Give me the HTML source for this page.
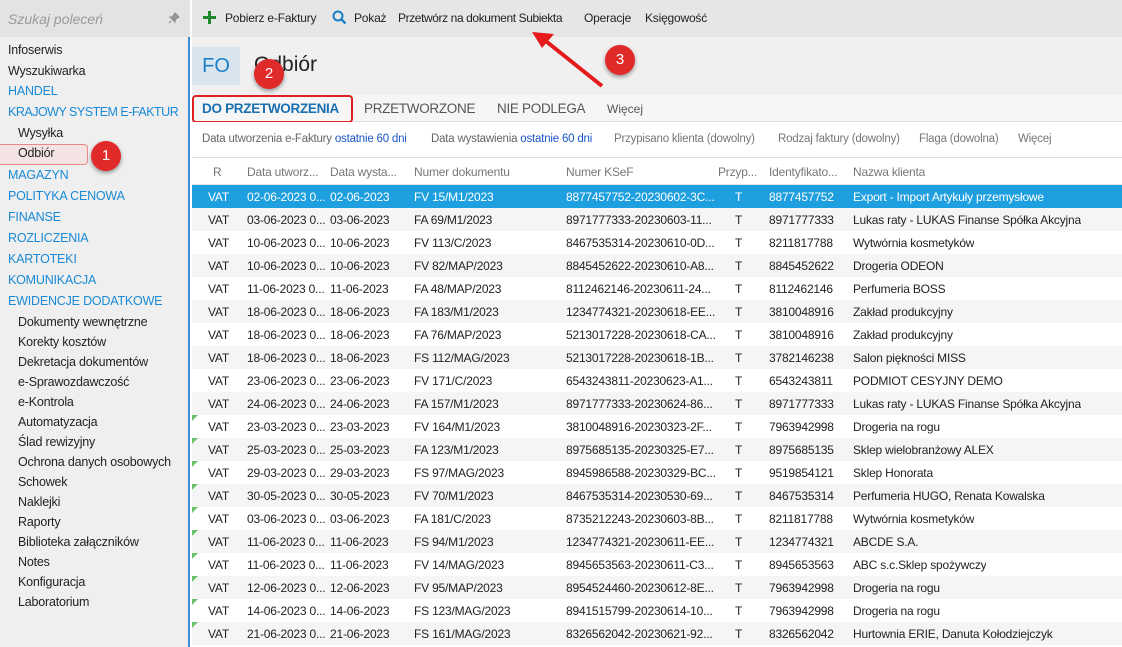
<!DOCTYPE html>
<html><head><meta charset="utf-8"><style>
*{margin:0;padding:0;box-sizing:border-box}
body{width:1122px;height:647px;overflow:hidden;background:#fff;font-family:"Liberation Sans",sans-serif;font-size:12px;color:#222;position:relative}
.abs{position:absolute;white-space:nowrap}
#side{position:absolute;left:0;top:0;width:190px;height:647px;background:#efefef;border-right:2px solid #3d8ed0}
#search{position:absolute;left:0;top:0;width:190px;height:37px;background:#e3e3e3}
.s{position:absolute;left:8px;font-size:12.5px;color:#222;white-space:nowrap;letter-spacing:-0.2px}
.b{color:#1a8ad6}
.i{left:18px}
#tb{position:absolute;left:192px;top:0;width:930px;height:37px;background:#e6e6e6;font-size:12px;letter-spacing:-0.2px}
#hd{position:absolute;left:192px;top:37px;width:930px;height:58px;background:#f0f0f0}
#tabs{position:absolute;left:192px;top:95px;width:930px;height:27px;background:#f6f6f6;border-bottom:1px solid #ddd}
#filt{position:absolute;left:192px;top:122px;width:930px;height:36px;background:#fff;border-bottom:1px solid #ddd;letter-spacing:-0.2px}
.row{position:absolute;left:192px;width:930px;height:23px;letter-spacing:-0.2px}
.row span{position:absolute;top:5px;white-space:nowrap;overflow:hidden}
.sel{background:#1e9fe0;color:#fff}
.g{background:#f5f5f5}
.tri{position:absolute;left:0;top:0;width:0;height:0;border-top:6px solid #6cc16c;border-right:6px solid transparent}
.badge{position:absolute;width:30px;height:30px;border-radius:50%;background:#e02a2a;color:#fff;font-size:15px;text-align:center;line-height:30px;box-shadow:0 2px 4px rgba(0,0,0,.4)}
</style></head><body>
<div id="side">
<div id="search"><span class="abs" style="left:8px;top:11px;color:#999;font-style:italic;font-size:14px">Szukaj poleceń</span>
<svg class="abs" style="left:168px;top:12px" width="12" height="12" viewBox="0 0 12 12"><path d="M7 1l4 4-2 1-2 2 0 2-5-5 2 0 2-2z M3 9l-2 2" stroke="#888" fill="#999" stroke-width="1"/></svg></div>
<div class="s" style="top:43px">Infoserwis</div>
<div class="s" style="top:64px">Wyszukiwarka</div>
<div class="s b" style="top:84px">HANDEL</div>
<div class="s b" style="top:105px;letter-spacing:-0.5px">KRAJOWY SYSTEM E-FAKTUR</div>
<div class="s i" style="top:126px">Wysyłka</div>
<div class="abs" style="left:0;top:144px;width:88px;height:21px;border:1.5px solid #e88;border-left:none;border-radius:0 4px 4px 0;background:#f3e3e3"></div>
<div class="s i" style="top:146px">Odbiór</div>
<div class="s b" style="top:168px">MAGAZYN</div>
<div class="s b" style="top:189px">POLITYKA CENOWA</div>
<div class="s b" style="top:210px">FINANSE</div>
<div class="s b" style="top:231px">ROZLICZENIA</div>
<div class="s b" style="top:252px">KARTOTEKI</div>
<div class="s b" style="top:273px">KOMUNIKACJA</div>
<div class="s b" style="top:294px">EWIDENCJE DODATKOWE</div>
<div class="s i" style="top:315px">Dokumenty wewnętrzne</div>
<div class="s i" style="top:335px">Korekty kosztów</div>
<div class="s i" style="top:355px">Dekretacja dokumentów</div>
<div class="s i" style="top:375px">e-Sprawozdawczość</div>
<div class="s i" style="top:395px">e-Kontrola</div>
<div class="s i" style="top:415px">Automatyzacja</div>
<div class="s i" style="top:435px">Ślad rewizyjny</div>
<div class="s i" style="top:455px">Ochrona danych osobowych</div>
<div class="s i" style="top:475px">Schowek</div>
<div class="s i" style="top:495px">Naklejki</div>
<div class="s i" style="top:515px">Raporty</div>
<div class="s i" style="top:535px">Biblioteka załączników</div>
<div class="s i" style="top:555px">Notes</div>
<div class="s i" style="top:575px">Konfiguracja</div>
<div class="s i" style="top:595px">Laboratorium</div>
</div>
<div class="badge" style="left:91px;top:141px">1</div>

<div id="tb">
<svg class="abs" style="left:11px;top:11px" width="13" height="13" viewBox="0 0 13 13"><path d="M6.5 0v13M0 6.5h13" stroke="#1e8a2e" stroke-width="3"/></svg>
<span class="abs" style="left:33px;top:11px">Pobierz e-Faktury</span>
<svg class="abs" style="left:140px;top:10px" width="15" height="15" viewBox="0 0 15 15"><circle cx="6" cy="6" r="4.5" stroke="#1a7fc8" stroke-width="2" fill="none"/><path d="M9.5 9.5l4 4" stroke="#1a7fc8" stroke-width="2.4"/></svg>
<span class="abs" style="left:162px;top:11px">Pokaż</span>
<span class="abs" style="left:206px;top:11px;letter-spacing:-0.4px">Przetwórz na dokument Subiekta</span>
<span class="abs" style="left:392px;top:11px">Operacje</span>
<span class="abs" style="left:453px;top:11px">Księgowość</span>
</div>
<div id="hd">
<div class="abs" style="left:0;top:10px;width:48px;height:38px;background:#d8e4ee;color:#1a7fc8;font-size:20px;text-align:center;line-height:38px">FO</div>
<span class="abs" style="left:62px;top:16px;font-size:21px;color:#222">Odbiór</span>
</div>
<div class="badge" style="left:254px;top:59px">2</div>
<div class="badge" style="left:605px;top:45px">3</div>
<svg class="abs" style="left:530px;top:28px" width="80" height="60" viewBox="0 0 80 60"><path d="M72 58L12 10" stroke="#e51b1b" stroke-width="4"/><path d="M2 4L24 6 12 20z" fill="#e51b1b"/></svg>

<div id="tabs">
<div class="abs" style="left:0;top:0;width:161px;height:28px;border:2px solid #e02020;border-radius:4px;background:#f6f6f6"></div>
<span class="abs" style="left:10px;top:6px;font-weight:bold;color:#1a6fb0;font-size:13.5px;letter-spacing:-0.3px">DO PRZETWORZENIA</span>
<span class="abs" style="left:172px;top:6px;color:#555;font-size:13.5px;letter-spacing:-0.3px">PRZETWORZONE</span>
<span class="abs" style="left:305px;top:6px;color:#555;font-size:13.5px;letter-spacing:-0.3px">NIE PODLEGA</span>
<span class="abs" style="left:415px;top:7px;color:#555;font-size:12px">Więcej</span>
</div>
<div id="filt">
<span class="abs" style="left:10px;top:11px;color:#666;font-size:11.5px">Data utworzenia e-Faktury <span style="color:#1a55c8">ostatnie 60 dni</span></span>
<span class="abs" style="left:239px;top:11px;color:#666;font-size:11.5px">Data wystawienia <span style="color:#1a55c8">ostatnie 60 dni</span></span>
<span class="abs" style="left:422px;top:11px;color:#777;font-size:11.5px">Przypisano klienta (dowolny)</span>
<span class="abs" style="left:586px;top:11px;color:#777;font-size:11.5px">Rodzaj faktury (dowolny)</span>
<span class="abs" style="left:727px;top:11px;color:#777;font-size:11.5px">Flaga (dowolna)</span>
<span class="abs" style="left:826px;top:11px;color:#777;font-size:11.5px">Więcej</span>
</div>
<div class="row" style="top:159px;height:26px;color:#777;border-bottom:1px solid #e5e5e5">
<span style="left:21px;top:6px">R</span><span style="left:55px;top:6px">Data utworz...</span><span style="left:138px;top:6px">Data wysta...</span><span style="left:222px;top:6px">Numer dokumentu</span><span style="left:374px;top:6px">Numer KSeF</span><span style="left:526px;top:6px">Przyp...</span><span style="left:577px;top:6px">Identyfikato...</span><span style="left:661px;top:6px">Nazwa klienta</span>
</div>
<div id="rows"></div>
<script>
var d=[
["02-06-2023","02-06-2023","FV 15/M1/2023","8877457752-20230602-3C...","8877457752","Export - Import Artykuły przemysłowe"],
["03-06-2023","03-06-2023","FA 69/M1/2023","8971777333-20230603-11...","8971777333","Lukas raty - LUKAS Finanse Spółka Akcyjna"],
["10-06-2023","10-06-2023","FV 113/C/2023","8467535314-20230610-0D...","8211817788","Wytwórnia kosmetyków"],
["10-06-2023","10-06-2023","FV 82/MAP/2023","8845452622-20230610-A8...","8845452622","Drogeria ODEON"],
["11-06-2023","11-06-2023","FA 48/MAP/2023","8112462146-20230611-24...","8112462146","Perfumeria BOSS"],
["18-06-2023","18-06-2023","FA 183/M1/2023","1234774321-20230618-EE...","3810048916","Zakład produkcyjny"],
["18-06-2023","18-06-2023","FA 76/MAP/2023","5213017228-20230618-CA...","3810048916","Zakład produkcyjny"],
["18-06-2023","18-06-2023","FS 112/MAG/2023","5213017228-20230618-1B...","3782146238","Salon piękności MISS"],
["23-06-2023","23-06-2023","FV 171/C/2023","6543243811-20230623-A1...","6543243811","PODMIOT CESYJNY DEMO"],
["24-06-2023","24-06-2023","FA 157/M1/2023","8971777333-20230624-86...","8971777333","Lukas raty - LUKAS Finanse Spółka Akcyjna"],
["23-03-2023","23-03-2023","FV 164/M1/2023","3810048916-20230323-2F...","7963942998","Drogeria na rogu"],
["25-03-2023","25-03-2023","FA 123/M1/2023","8975685135-20230325-E7...","8975685135","Sklep wielobranżowy  ALEX"],
["29-03-2023","29-03-2023","FS 97/MAG/2023","8945986588-20230329-BC...","9519854121","Sklep Honorata"],
["30-05-2023","30-05-2023","FV 70/M1/2023","8467535314-20230530-69...","8467535314","Perfumeria HUGO, Renata Kowalska"],
["03-06-2023","03-06-2023","FA 181/C/2023","8735212243-20230603-8B...","8211817788","Wytwórnia kosmetyków"],
["11-06-2023","11-06-2023","FS 94/M1/2023","1234774321-20230611-EE...","1234774321","ABCDE S.A."],
["11-06-2023","11-06-2023","FV 14/MAG/2023","8945653563-20230611-C3...","8945653563","ABC s.c.Sklep spożywczy"],
["12-06-2023","12-06-2023","FV 95/MAP/2023","8954524460-20230612-8E...","7963942998","Drogeria na rogu"],
["14-06-2023","14-06-2023","FS 123/MAG/2023","8941515799-20230614-10...","7963942998","Drogeria na rogu"],
["21-06-2023","21-06-2023","FS 161/MAG/2023","8326562042-20230621-92...","8326562042","Hurtownia ERIE, Danuta Kołodziejczyk"]];
var h="";
d.forEach(function(r,i){
var c=i==0?"sel":(i%2?"g":"");
h+='<div class="row '+c+'" style="top:'+(185+i*23)+'px">'+(i>=10?'<div class="tri"></div>':'')+
'<span style="left:16px">VAT</span><span style="left:55px;width:78px">'+r[0]+' 0...</span><span style="left:138px">'+r[1]+'</span><span style="left:222px">'+r[2]+'</span><span style="left:374px">'+r[3]+'</span><span style="left:543px">T</span><span style="left:577px">'+r[4]+'</span><span style="left:661px">'+r[5]+'</span></div>';});
document.getElementById("rows").innerHTML=h;
</script>
</body></html>
